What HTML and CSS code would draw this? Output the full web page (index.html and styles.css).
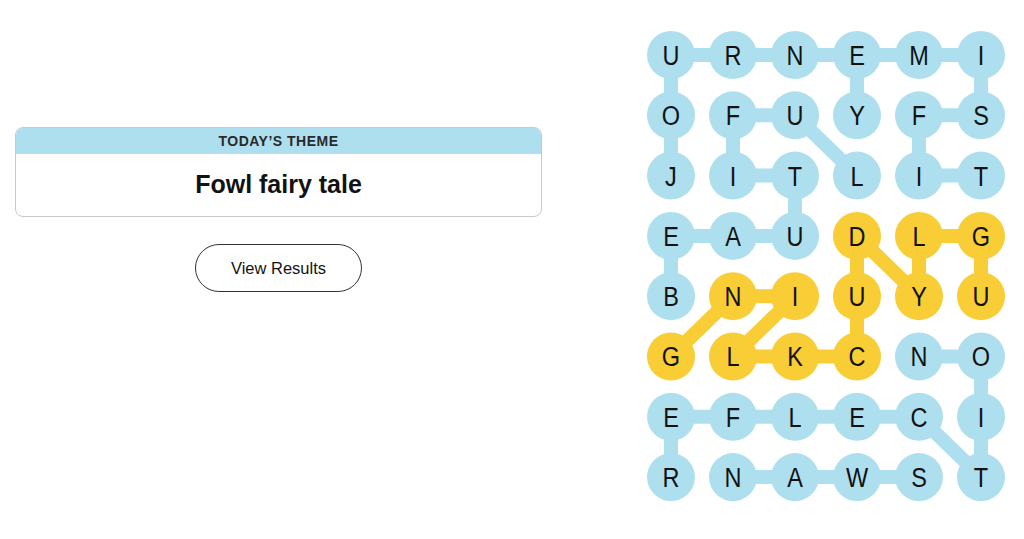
FILE: index.html
```html
<!DOCTYPE html>
<html lang="en">
<head>
<meta charset="utf-8">
<title>Strands</title>
<link rel="stylesheet" href="styles.css">
</head>
<body>
<main class="page">
  <section class="info">
    <div class="theme-card">
      <div class="theme-head">TODAY’S THEME</div>
      <div class="theme-body">Fowl fairy tale</div>
    </div>
    <button class="results-btn" type="button">View Results</button>
  </section>
  <section class="board">
    <svg class="board-svg" width="358" height="470" viewBox="0 0 358 470" xmlns="http://www.w3.org/2000/svg">
      <g class="lines blue-lines">
        <!-- JOURNEY -->
        <line x1="24" y1="24" x2="272" y2="24"/>
        <line x1="24" y1="24" x2="24" y2="144.6"/>
        <line x1="210" y1="24" x2="210" y2="84.3"/>
        <!-- MISFIT -->
        <line x1="272" y1="24" x2="334" y2="24"/>
        <line x1="334" y1="24" x2="334" y2="84.3"/>
        <line x1="272" y1="84.3" x2="334" y2="84.3"/>
        <line x1="272" y1="84.3" x2="272" y2="144.6"/>
        <line x1="272" y1="144.6" x2="334" y2="144.6"/>
        <!-- BEAUTIFUL -->
        <line x1="24" y1="204.9" x2="24" y2="265.2"/>
        <line x1="24" y1="204.9" x2="148" y2="204.9"/>
        <line x1="148" y1="144.6" x2="148" y2="204.9"/>
        <line x1="86" y1="144.6" x2="148" y2="144.6"/>
        <line x1="86" y1="84.3" x2="86" y2="144.6"/>
        <line x1="86" y1="84.3" x2="148" y2="84.3"/>
        <line x1="148" y1="84.3" x2="210" y2="144.6"/>
        <!-- REFLECTION -->
        <line x1="24" y1="385.8" x2="24" y2="446.1"/>
        <line x1="24" y1="385.8" x2="272" y2="385.8"/>
        <line x1="272" y1="385.8" x2="334" y2="446.1"/>
        <line x1="334" y1="325.5" x2="334" y2="446.1"/>
        <line x1="272" y1="325.5" x2="334" y2="325.5"/>
        <!-- SWAN -->
        <line x1="86" y1="446.1" x2="272" y2="446.1"/>
      </g>
      <g class="lines gold-lines">
        <line x1="334" y1="204.9" x2="334" y2="265.2"/>
        <line x1="272" y1="204.9" x2="334" y2="204.9"/>
        <line x1="272" y1="204.9" x2="272" y2="265.2"/>
        <line x1="272" y1="265.2" x2="210" y2="204.9"/>
        <line x1="210" y1="204.9" x2="210" y2="325.5"/>
        <line x1="86" y1="325.5" x2="210" y2="325.5"/>
        <line x1="86" y1="325.5" x2="148" y2="265.2"/>
        <line x1="86" y1="265.2" x2="148" y2="265.2"/>
        <line x1="86" y1="265.2" x2="24" y2="325.5"/>
      </g>
      <g class="cells"></g>
    </svg>
  </section>
</main>
<script src="board.js"></script>
</body>
</html>
```

FILE: board.js
```js
(function () {
  var rows = [
    "URNEMI",
    "OFUYFS",
    "JITLIT",
    "EAUDLG",
    "BNIUYU",
    "GLKCNO",
    "EFLECI",
    "RNAWST"
  ];
  var gold = {
    "3,3": 1, "3,4": 1, "3,5": 1,
    "4,1": 1, "4,2": 1, "4,3": 1, "4,4": 1, "4,5": 1,
    "5,0": 1, "5,1": 1, "5,2": 1, "5,3": 1
  };
  var ns = "http://www.w3.org/2000/svg";
  var g = document.querySelector(".cells");
  rows.forEach(function (row, r) {
    row.split("").forEach(function (ch, c) {
      var cx = 24 + 62 * c;
      var cy = 24 + 60.3 * r;
      var circle = document.createElementNS(ns, "circle");
      circle.setAttribute("cx", cx);
      circle.setAttribute("cy", cy.toFixed(1));
      circle.setAttribute("r", 24);
      circle.setAttribute("class", gold[r + "," + c] ? "cell gold" : "cell blue");
      g.appendChild(circle);
      var t = document.createElementNS(ns, "text");
      t.setAttribute("x", cx);
      t.setAttribute("y", (cy + 10).toFixed(1));
      t.setAttribute("class", "letter");
      t.textContent = ch;
      g.appendChild(t);
    });
  });
})();
```

FILE: styles.css
```css
* { box-sizing: border-box; }

html, body {
  margin: 0;
  padding: 0;
  background: #ffffff;
}

body {
  font-family: "Liberation Sans", Arial, sans-serif;
  color: #121212;
}

.page {
  display: flex;
  align-items: flex-start;
  width: 1024px;
  height: 539px;
}

.info {
  width: 527px;
  margin-left: 15px;
  margin-top: 127px;
  display: flex;
  flex-direction: column;
  align-items: center;
}

.theme-card {
  width: 100%;
  border: 1px solid #c9c9c9;
  border-radius: 8px;
  overflow: hidden;
}

.theme-head {
  background: #aedfee;
  height: 26px;
  line-height: 27px;
  text-align: center;
  font-size: 14px;
  font-weight: 700;
  letter-spacing: 0.5px;
  color: #2a2a2a;
}

.theme-body {
  height: 62px;
  display: flex;
  align-items: center;
  justify-content: center;
  font-size: 25px;
  font-weight: 700;
  padding-bottom: 2px;
}

.results-btn {
  margin-top: 27px;
  width: 167px;
  height: 48px;
  border: 1px solid #333333;
  border-radius: 24px;
  background: #ffffff;
  font-family: "Liberation Sans", Arial, sans-serif;
  font-size: 16.5px;
  color: #121212;
}

.board {
  margin-left: 105px;
  margin-top: 31px;
}

.board-svg {
  display: block;
}

.lines line {
  stroke-width: 14;
  stroke-linecap: butt;
}

.blue-lines line { stroke: #aedfee; }
.gold-lines line { stroke: #f8cd35; }

.cell.blue { fill: #aedfee; }
.cell.gold { fill: #f8cd35; }

.letter {
  font-family: "Liberation Sans", Arial, sans-serif;
  font-size: 28px;
  fill: #121212;
  text-anchor: middle;
  transform-box: fill-box;
  transform-origin: center;
  transform: scaleX(0.84);
}
```
